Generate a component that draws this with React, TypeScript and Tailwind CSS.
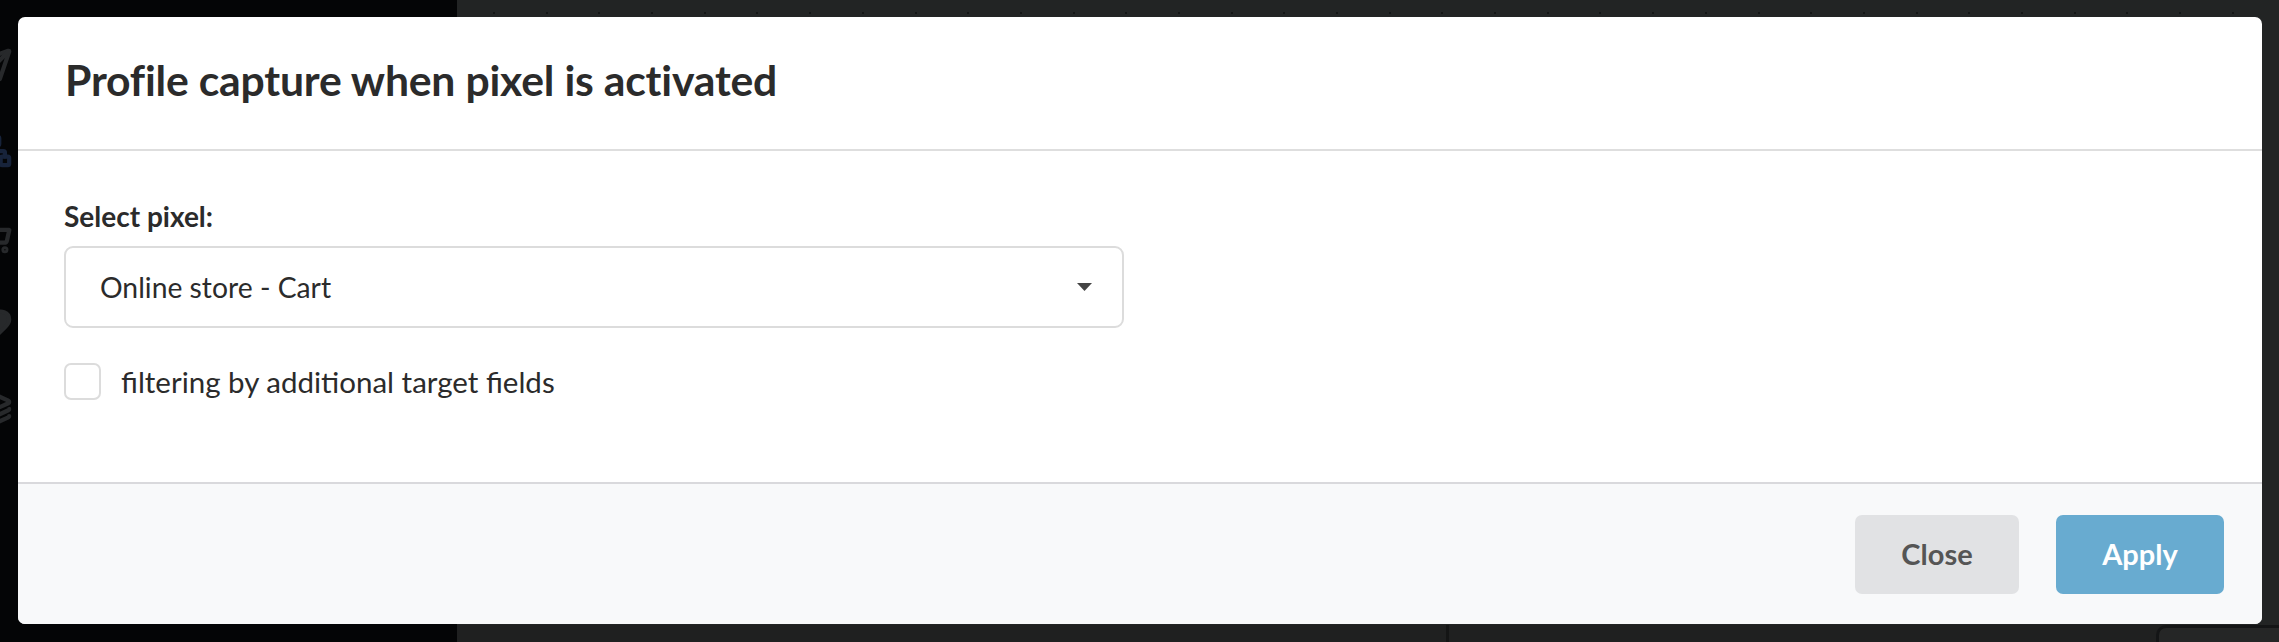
import { Heart, Layers, Network, Send, ShoppingCart } from "lucide-react";

const FONT = { fontFamily: "Lato, 'Open Sans', sans-serif" };

const dots = Array.from({ length: 34 }, (_, i) => i);

function Backdrop() {
  return (
    <div className="flex h-[642px] w-full">
      <div className="relative w-[457px] shrink-0 overflow-hidden bg-[#040506]">
        <div className="flex flex-col gap-[52px] pt-[48px] -ml-[22px] text-[#27292b]">
          <Send size={34} strokeWidth={3} />
          <Network size={34} strokeWidth={3} className="text-[#17233a]" />
          <ShoppingCart size={34} strokeWidth={3} />
          <Heart size={34} strokeWidth={3} fill="#27292b" />
          <Layers size={34} strokeWidth={3} />
        </div>
      </div>
      <div className="flex flex-1 flex-col bg-[#222424]">
        <div className="flex h-[17px] items-end gap-[50.7px] pl-[36px] pb-[3px]">
          {dots.map((d) => (
            <span key={d} className="h-[2px] w-[2px] rounded-full bg-[#0f1010]" />
          ))}
        </div>
        <div className="flex-1" />
        <div className="flex h-[17px] bg-[#1f2020]">
          <div className="ml-[989px] w-[3px] bg-[#141515]" />
          <div className="flex-1" />
          <div className="w-[123px] rounded-tl-[10px] border-l-[3px] border-t-[3px] border-[#141516] bg-[#252626]" />
        </div>
      </div>
    </div>
  );
}

function Modal() {
  return (
    <div
      className="absolute left-[18px] top-[17px] w-[2244px] overflow-hidden rounded-[7px] bg-white text-[#2b2b2b]"
      style={FONT}
    >
      <div className="flex h-[134px] items-center border-b-2 border-[#dedede] px-[47px] pb-[5px]">
        <h2 className="text-[42.7px] font-bold leading-none tracking-[-0.2px]">
          Profile capture when pixel is activated
        </h2>
      </div>

      <div className="px-[46px] pt-[49px] pb-[82px]">
        <label className="block text-[28px] font-bold leading-[32px]">Select pixel:</label>
        <div className="mt-[14px] flex h-[82px] w-[1060px] items-center justify-between rounded-[9px] border-2 border-[#dcdcdc] pl-[34px] pr-[30px]">
          <span className="text-[28.3px] leading-none text-[#2b2b2b]">Online store - Cart</span>
          <svg width="15" height="8" viewBox="0 0 15 8">
            <path d="M0 0 H15 L7.5 8 Z" fill="#444" />
          </svg>
        </div>
        <label className="mt-[35px] flex items-center gap-[20px]">
          <span className="h-[37px] w-[37px] rounded-[7px] border-2 border-[#dcdcdc] bg-white" />
          <span className="text-[29.5px] leading-none">filtering by additional target fields</span>
        </label>
      </div>

      <div className="flex h-[142px] items-center justify-end gap-[37px] border-t-2 border-[#d9d9dc] bg-[#f8f9fa] pr-[38px]">
        <button
          type="button"
          className="h-[79px] w-[164px] rounded-[7px] bg-[#e1e2e4] text-[29px] font-bold text-[#555]"
        >
          Close
        </button>
        <button
          type="button"
          className="h-[79px] w-[168px] rounded-[7px] bg-[#68abd0] text-[29px] font-bold text-white"
        >
          Apply
        </button>
      </div>
    </div>
  );
}

export default function App() {
  return (
    <div className="relative h-[642px] w-[2279px] overflow-hidden">
      <Backdrop />
      <Modal />
    </div>
  );
}
